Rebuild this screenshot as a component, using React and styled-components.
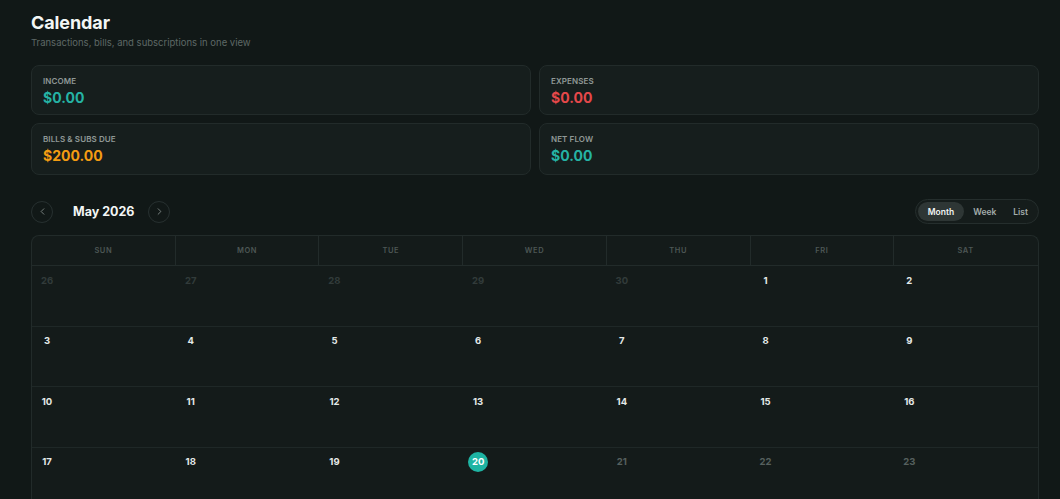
import React from "react";
import styled, { createGlobalStyle } from "styled-components";
import { ChevronLeft, ChevronRight } from "lucide-react";

const Global = createGlobalStyle`
  * { box-sizing: border-box; }
  html, body { margin: 0; padding: 0; background: #111817; }
  body { font-family: Inter, "Noto Sans", "Liberation Sans", sans-serif; color: #e8edec; }
`;

const Page = styled.div`
  padding: 11px 21px 0 31px;
  min-height: 499px;
  background: #111817;
`;

const Title = styled.h1`
  margin: 0;
  font-size: 18px;
  line-height: 24px;
  font-weight: 700;
  color: #f3f6f5;
  letter-spacing: -0.1px;
`;

const Subtitle = styled.p`
  margin: 1px 0 0;
  font-size: 9.5px;
  line-height: 14px;
  color: #5e6866;
`;

const Stats = styled.div`
  margin-top: 15px;
  display: grid;
  grid-template-columns: 1fr 1fr;
  gap: 8px;
`;

const Card = styled.div`
  background: #161e1d;
  border: 1px solid #222b2a;
  border-radius: 8px;
  padding: 10px 11px 9px;
  height: ${(p) => p.$h}px;
`;

const Label = styled.div`
  font-size: 8px;
  line-height: 10px;
  font-weight: 600;
  color: #8f9896;
  text-transform: uppercase;
  letter-spacing: 0.1px;
`;

const Value = styled.div`
  margin-top: 3px;
  font-size: 14px;
  line-height: 18px;
  font-weight: 700;
  color: ${(p) => p.$color};
`;

const NavRow = styled.div`
  margin-top: 24px;
  display: flex;
  align-items: center;
  justify-content: space-between;
  height: 25px;
`;

const NavLeft = styled.div`
  display: flex;
  align-items: center;
`;

const RoundButton = styled.button`
  width: 22px;
  height: 22px;
  border-radius: 50%;
  border: 1px solid #273030;
  background: transparent;
  color: #9aa3a1;
  display: flex;
  align-items: center;
  justify-content: center;
  padding: 0;
`;

const Month = styled.div`
  width: 95px;
  padding-left: 20px;
  font-size: 12.5px;
  font-weight: 700;
  color: #f3f6f5;
`;

const Segmented = styled.div`
  display: flex;
  align-items: center;
  height: 25px;
  padding: 2px;
  border-radius: 13px;
  border: 1px solid #252e2d;
  background: #151c1b;
`;

const Seg = styled.button`
  height: 19px;
  padding: 0 ${(p) => p.$px}px;
  border: none;
  border-radius: 10px;
  font-family: inherit;
  font-size: 8.5px;
  font-weight: 600;
  background: ${(p) => (p.$active ? "#2e3635" : "transparent")};
  color: ${(p) => (p.$active ? "#f1f4f3" : "#a4adab")};
`;

const Calendar = styled.div`
  margin-top: 11px;
  border: 1px solid #222b2a;
  border-bottom: none;
  border-radius: 8px 8px 0 0;
  background: #141b1a;
  overflow: hidden;
`;

const HeadRow = styled.div`
  display: grid;
  grid-template-columns: repeat(7, 1fr);
  height: 30px;
  border-bottom: 1px solid #222b2a;
`;

const HeadCell = styled.div`
  display: flex;
  align-items: center;
  justify-content: center;
  font-size: 7.5px;
  font-weight: 600;
  letter-spacing: 0.6px;
  color: #4d5755;
  border-right: 1px solid ${(p) => (p.$last ? "transparent" : "#222b2a")};
`;

const Week = styled.div`
  display: grid;
  grid-template-columns: repeat(7, 1fr);
  height: 60.5px;
  border-bottom: 1px solid #1f2827;
`;

const Cell = styled.div`
  padding: 4px 5px;
`;

const DayNum = styled.div`
  width: 20px;
  height: 20px;
  display: flex;
  align-items: center;
  justify-content: center;
  border-radius: 50%;
  font-size: 9.5px;
  font-weight: 700;
  background: ${(p) => (p.$today ? "#1eb4a3" : "transparent")};
  color: ${(p) =>
    p.$today ? "#ffffff" : p.$other ? "#323b3a" : p.$future ? "#56605e" : "#e4e9e8"};
`;

const days = ["SUN", "MON", "TUE", "WED", "THU", "FRI", "SAT"];

const weeks = [
  [26, 27, 28, 29, 30, 1, 2],
  [3, 4, 5, 6, 7, 8, 9],
  [10, 11, 12, 13, 14, 15, 16],
  [17, 18, 19, 20, 21, 22, 23],
];

export default function App() {
  return (
    <>
      <Global />
      <Page>
        <Title>Calendar</Title>
        <Subtitle>Transactions, bills, and subscriptions in one view</Subtitle>
        <Stats>
          <Card $h={50}>
            <Label>Income</Label>
            <Value $color="#25b3a4">$0.00</Value>
          </Card>
          <Card $h={50}>
            <Label>Expenses</Label>
            <Value $color="#e5484a">$0.00</Value>
          </Card>
          <Card $h={52}>
            <Label>Bills &amp; Subs Due</Label>
            <Value $color="#f39c12">$200.00</Value>
          </Card>
          <Card $h={52}>
            <Label>Net Flow</Label>
            <Value $color="#25b3a4">$0.00</Value>
          </Card>
        </Stats>
        <NavRow>
          <NavLeft>
            <RoundButton aria-label="Previous month">
              <ChevronLeft size={11} strokeWidth={1.6} />
            </RoundButton>
            <Month>May 2026</Month>
            <RoundButton aria-label="Next month">
              <ChevronRight size={11} strokeWidth={1.6} />
            </RoundButton>
          </NavLeft>
          <Segmented>
            <Seg $active $px={10}>Month</Seg>
            <Seg $px={9}>Week</Seg>
            <Seg $px={8}>List</Seg>
          </Segmented>
        </NavRow>
        <Calendar>
          <HeadRow>
            {days.map((d, i) => (
              <HeadCell key={d} $last={i === 6}>{d}</HeadCell>
            ))}
          </HeadRow>
          {weeks.map((w, wi) => (
            <Week key={wi}>
              {w.map((d, di) => {
                const other = wi === 0 && d > 20;
                const future = wi === 3 && d > 20;
                const today = wi === 3 && d === 20;
                return (
                  <Cell key={di}>
                    <DayNum $other={other} $future={future} $today={today}>
                      {d}
                    </DayNum>
                  </Cell>
                );
              })}
            </Week>
          ))}
        </Calendar>
      </Page>
    </>
  );
}
